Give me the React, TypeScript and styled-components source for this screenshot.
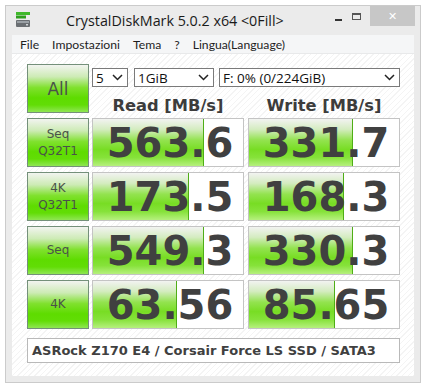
import React from 'react';
import styled, { createGlobalStyle } from 'styled-components';

type Result = { label: string[]; read: string; readPct: number; write: string; writePct: number };

const results: Result[] = [
    { label: ['Seq', 'Q32T1'], read: '563.6', readPct: 74, write: '331.7', writePct: 69 },
    { label: ['4K', 'Q32T1'], read: '173.5', readPct: 64, write: '168.3', writePct: 63 },
    { label: ['Seq'], read: '549.3', readPct: 74, write: '330.3', writePct: 69 },
    { label: ['4K'], read: '63.56', readPct: 56, write: '85.65', writePct: 57 },
];

const GlobalStyle = createGlobalStyle`
  body {
    margin: 0;
    background: #fff;
  }
`;

const Chevron = () => (
    <svg width="11" height="7" viewBox="0 0 11 7">
        <polyline points="1,1 5.5,5.5 10,1" fill="none" stroke="#222" strokeWidth="1.5" />
    </svg>
);

const AppIcon = () => (
    <svg width="16" height="16" viewBox="0 0 16 16">
        <rect x="1" y="0" width="14" height="3" fill="#3fb82a" />
        <rect x="1" y="3.5" width="10" height="3" fill="#2e9e1d" />
        <rect x="1" y="8" width="14" height="7" rx="1" fill="#6a6e72" />
        <rect x="2" y="9" width="12" height="2" fill="#9aa0a5" />
        <rect x="11" y="12" width="2" height="1.5" fill="#cfd3d6" />
    </svg>
);

const App = () => (
    <>
        <GlobalStyle />
        <Window>
            <TitleBar>
                <IconWrap>
                    <AppIcon />
                </IconWrap>
                <Title>CrystalDiskMark 5.0.2 x64 &lt;0Fill&gt;</Title>
                <Controls>
                    <MinDash />
                    <MaxBox />
                    <CloseBtn>✕</CloseBtn>
                </Controls>
            </TitleBar>
            <Client>
                <MenuBar>
                    <MenuItem>File</MenuItem>
                    <MenuItem>Impostazioni</MenuItem>
                    <MenuItem>Tema</MenuItem>
                    <MenuItem>?</MenuItem>
                    <MenuItem>Lingua(Language)</MenuItem>
                </MenuBar>
                <Main>
                    <TestButton $big>All</TestButton>
                    <TopPanel>
                        <SelectRow>
                            <Select $w={36}>5<Chevron /></Select>
                            <Select $w={80}>1GiB<Chevron /></Select>
                            <Select $w={181}>F: 0% (0/224GiB)<Chevron /></Select>
                        </SelectRow>
                        <Header>Read [MB/s]</Header>
                        <Header>Write [MB/s]</Header>
                    </TopPanel>
                    {results.map((r) => (
                        <React.Fragment key={r.label.join(' ') + r.read}>
                            <TestButton>
                                {r.label.map((l) => (
                                    <span key={l}>{l}</span>
                                ))}
                            </TestButton>
                            <ValueCell>
                                <Bar style={{ width: `${r.readPct}%` }} />
                                <Value>{r.read}</Value>
                            </ValueCell>
                            <ValueCell $shift>
                                <Bar style={{ width: `${r.writePct}%` }} />
                                <Value>{r.write}</Value>
                            </ValueCell>
                        </React.Fragment>
                    ))}
                    <Comment>ASRock Z170 E4 / Corsair Force LS SSD / SATA3</Comment>
                </Main>
            </Client>
        </Window>
    </>
);

const Window = styled('div')`
  margin: 5px 0 0 5px;
  width: 416px;
  height: 378px;
  box-sizing: border-box;
  border: 1px solid #cbcbcb;
  background: #ebebeb;
  display: flex;
  flex-direction: column;
`;

const TitleBar = styled('div')`
  height: 29px;
  display: flex;
  align-items: flex-start;
  flex-shrink: 0;
`;

const IconWrap = styled('div')`
  margin: 6px 0 0 9px;
  display: flex;
`;

const Title = styled('div')`
  margin: 5px 0 0 35px;
  font-family: 'Open Sans', 'Noto Sans', sans-serif;
  font-size: 14.3px;
  line-height: 20px;
  color: #1a1a1a;
  white-space: nowrap;
`;

const Controls = styled('div')`
  margin-left: auto;
  display: flex;
  align-items: flex-start;
  margin-right: 5px;
`;

const MinDash = styled('div')`
  width: 7px;
  height: 2px;
  background: #333;
  margin: 13px 10px 0 0;
`;

const MaxBox = styled('div')`
  width: 9px;
  height: 7px;
  box-sizing: border-box;
  border: 1px solid #555;
  border-top-width: 2px;
  margin: 7px 9px 0 0;
`;

const CloseBtn = styled('div')`
  width: 45px;
  height: 20px;
  background: #c7c7c7;
  color: #fff;
  font-family: 'DejaVu Sans', sans-serif;
  font-size: 11px;
  display: flex;
  align-items: center;
  justify-content: center;
`;

const Client = styled('div')`
  flex: 1;
  margin: 0 6px 6px 6px;
  display: flex;
  flex-direction: column;
  background: #fff;
`;

const MenuBar = styled('div')`
  height: 19px;
  box-sizing: border-box;
  background: #f5f6f7;
  border-bottom: 1px solid #e8e9ea;
  display: flex;
  align-items: center;
  gap: 13px;
  padding-left: 8px;
`;

const MenuItem = styled('span')`
  font-family: Lato, 'Open Sans', sans-serif;
  font-size: 12.2px;
  color: #1e1e1e;
`;

const Main = styled('div')`
  flex: 1;
  background: repeating-linear-gradient(135deg, #ffffff 0 3px, #f4f4f4 3px 4px);
  padding: 10px 14px 8px 15px;
  display: grid;
  grid-template-columns: 62px 152px 153px;
  grid-template-rows: repeat(5, 49px) 29px;
  column-gap: 3px;
  row-gap: 5px;
  align-content: start;
`;

const TestButton = styled('div')<{ $big?: boolean }>`
  box-sizing: border-box;
  border: 1px solid #74907a;
  background: linear-gradient(
    to bottom,
    #f2f4f0 0%,
    #cdebb5 25%,
    #80e12e 48%,
    #5edc00 70%,
    #62dd06 85%,
    #8fe653 100%
  );
  display: flex;
  flex-direction: column;
  align-items: center;
  justify-content: center;
  font-family: 'DejaVu Sans', sans-serif;
  font-size: ${(p) => (p.$big ? '17px' : '12px')};
  line-height: ${(p) => (p.$big ? '20px' : '17px')};
  color: #4a524a;
`;

const TopPanel = styled('div')`
  grid-column: 2 / 4;
  display: grid;
  grid-template-columns: 152px 152px;
  grid-template-rows: 19px 1fr;
  column-gap: 4px;
  padding-top: 4px;
`;

const SelectRow = styled('div')`
  grid-column: 1 / -1;
  display: flex;
  gap: 6px;

  & > *:last-child {
    margin-left: -1px;
  }
`;

const Select = styled('div')<{ $w: number }>`
  width: ${(p) => p.$w}px;
  box-sizing: border-box;
  border: 1px solid #7a7a7a;
  background: #fff;
  display: flex;
  align-items: center;
  justify-content: space-between;
  padding: 0 4px 0 3px;
  font-family: 'Open Sans', 'Noto Sans', sans-serif;
  font-size: 13.5px;
  color: #111;
`;

const Header = styled('div')`
  text-align: center;
  font-family: 'DejaVu Sans', sans-serif;
  font-weight: bold;
  font-size: 16.3px;
  line-height: 20px;
  padding-top: 9px;
  color: #3c3c3c;
`;

const ValueCell = styled('div')<{ $shift?: boolean }>`
  position: relative;
  box-sizing: border-box;
  width: 152px;
  margin-left: ${(p) => (p.$shift ? '1px' : '0')};
  border: 1px solid #c4c4c4;
  background: #fff;
  display: flex;
  align-items: center;
  justify-content: center;
  overflow: hidden;
`;

const Bar = styled('div')`
  position: absolute;
  left: 0;
  top: 0;
  bottom: 0;
  box-sizing: border-box;
  border-right: 1px solid #4fae16;
  background: linear-gradient(
    to bottom,
    #f2f3f1 0%,
    #d4ecc0 22%,
    #93e34f 45%,
    #78dd24 65%,
    #86e23a 82%,
    #b6f07e 100%
  );
`;

const Value = styled('span')`
  position: relative;
  padding-left: 4px;
  font-family: 'DejaVu Sans', sans-serif;
  font-weight: bold;
  font-size: 40px;
  line-height: 1;
  color: #404040;
`;

const Comment = styled('div')`
  grid-column: 1 / -1;
  width: 373px;
  margin-top: 4px;
  box-sizing: border-box;
  border: 1px solid #b9b9b9;
  background: #fff;
  display: flex;
  align-items: center;
  padding-left: 4px;
  font-family: 'DejaVu Sans', sans-serif;
  font-weight: bold;
  font-size: 13px;
  color: #404040;
`;

export default App;
